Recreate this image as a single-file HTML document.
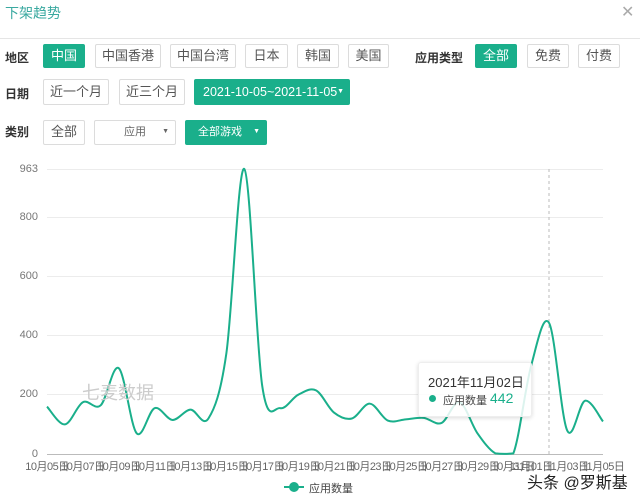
<!DOCTYPE html>
<html><head><meta charset="utf-8"><style>
*{margin:0;padding:0;box-sizing:border-box}
body{width:640px;height:502px;background:#fff;font-family:"Liberation Sans","Noto Sans CJK SC",sans-serif;position:relative;overflow:hidden;color:#555}
.a{position:absolute}
.btn{position:absolute;height:24px;border:1px solid #dcdcdc;border-radius:2px;font-size:13px;line-height:22px;text-align:center;color:#555;background:#fff;white-space:nowrap}
.g{background:#1aaf8b;border-color:#1aaf8b;color:#fff}
.lbl{position:absolute;font-size:12px;color:#333;font-weight:bold}
.yl{position:absolute;font-size:11px;color:#777;width:30px;text-align:right;left:8px}
</style></head><body>
<div class="a" style="left:5px;top:3px;font-size:14px;color:#3aa9a0">下架趋势</div>
<div class="a" style="left:621px;top:2px;font-size:16px;color:#aaa">✕</div>
<div class="a" style="left:0;top:38px;width:640px;height:1px;background:#e5e5e5"></div>

<div class="lbl" style="left:5px;top:49px">地区</div>
<div class="btn g" style="left:43px;top:44px;width:42px">中国</div>
<div class="btn" style="left:95px;top:44px;width:66px">中国香港</div>
<div class="btn" style="left:170px;top:44px;width:66px">中国台湾</div>
<div class="btn" style="left:245px;top:44px;width:43px">日本</div>
<div class="btn" style="left:297px;top:44px;width:42px">韩国</div>
<div class="btn" style="left:348px;top:44px;width:41px">美国</div>
<div class="lbl" style="left:415px;top:49px">应用类型</div>
<div class="btn g" style="left:475px;top:44px;width:42px">全部</div>
<div class="btn" style="left:527px;top:44px;width:42px">免费</div>
<div class="btn" style="left:578px;top:44px;width:42px">付费</div>

<div class="lbl" style="left:5px;top:85px">日期</div>
<div class="btn" style="left:43px;top:79px;width:66px;height:26px;line-height:24px">近一个月</div>
<div class="btn" style="left:119px;top:79px;width:66px;height:26px;line-height:24px">近三个月</div>
<div class="btn g" style="left:194px;top:79px;width:156px;height:26px;line-height:24px;text-align:left;padding-left:8px;font-size:12.5px">2021-10-05~2021-11-05<span style="font-size:7px;position:absolute;right:5px">▼</span></div>

<div class="lbl" style="left:5px;top:123px">类别</div>
<div class="btn" style="left:43px;top:120px;width:42px;height:25px">全部</div>
<div class="btn" style="left:94px;top:120px;width:82px;height:25px;font-size:11px;color:#666">应用<span style="font-size:7px;position:absolute;right:6px">▼</span></div>
<div class="btn g" style="left:185px;top:120px;width:82px;height:25px;font-size:11px;text-align:left;padding-left:12px">全部游戏<span style="font-size:7px;position:absolute;right:6px">▼</span></div>

<svg class="a" style="left:0;top:0" width="640" height="502">
<g stroke="#ececec" stroke-width="1">
<line x1="47" x2="603" y1="169.5" y2="169.5"/><line x1="47" x2="603" y1="217.5" y2="217.5"/>
<line x1="47" x2="603" y1="276.5" y2="276.5"/><line x1="47" x2="603" y1="335.5" y2="335.5"/>
<line x1="47" x2="603" y1="394.5" y2="394.5"/></g>
<line x1="47" x2="603" y1="454.5" y2="454.5" stroke="#bbb"/>
<line x1="549" x2="549" y1="169" y2="454" stroke="#bbb" stroke-dasharray="3,3"/>
<path id="ln" fill="none" stroke="#1aaf8b" stroke-width="2"/>
</svg>
<div class="yl" style="top:163px">963</div>
<div class="yl" style="top:211px">800</div>
<div class="yl" style="top:270px">600</div>
<div class="yl" style="top:329px">400</div>
<div class="yl" style="top:388px">200</div>
<div class="yl" style="top:448px">0</div>
<div id="xl"></div>
<div class="a" style="left:82px;top:379px;font-size:18px;color:#ccc">七麦数据</div>

<div class="a" style="left:418px;top:362px;width:114px;height:55px;background:rgba(255,255,255,0.85);border:1px solid #eee;border-radius:3px;box-shadow:0 1px 4px rgba(0,0,0,.15)">
<div class="a" style="left:9px;top:9px;font-size:13px;color:#333">2021年11月02日</div>
<div class="a" style="left:10px;top:32px;width:7px;height:7px;border-radius:50%;background:#1aaf8b"></div>
<div class="a" style="left:24px;top:29px;font-size:11px;color:#444">应用数量</div>
<div class="a" style="left:71px;top:27px;font-size:14px;color:#1aaf8b">442</div>
</div>

<div class="a" style="left:284px;top:486px;width:20px;height:2px;background:#1aaf8b"></div>
<div class="a" style="left:289px;top:482px;width:10px;height:10px;border-radius:50%;background:#1aaf8b"></div>
<div class="a" style="left:309px;top:480px;font-size:11px;color:#444">应用数量</div>
<div class="a" style="left:527px;top:469px;font-size:16px;color:#222">头条 @罗斯基</div>

<script>
var v=[160,100,175,165,290,70,155,115,150,120,340,963,230,155,200,215,140,120,170,113,117,122,105,175,70,2,2,300,442,80,180,110];
var x0=47,dx=(603-47)/31,pts=v.map(function(a,i){return[x0+i*dx,454-a*285/963]});
function c(y){return Math.min(y,454);}
var d="M"+pts[0][0]+","+pts[0][1];
for(var i=0;i<pts.length-1;i++){var p0=pts[i-1]||pts[i],p1=pts[i],p2=pts[i+1],p3=pts[i+2]||p2;
d+=" C"+(p1[0]+(p2[0]-p0[0])/6)+","+c(p1[1]+(p2[1]-p0[1])/6)+" "+(p2[0]-(p3[0]-p1[0])/6)+","+c(p2[1]-(p3[1]-p1[1])/6)+" "+p2[0]+","+p2[1];}
document.getElementById("ln").setAttribute("d",d);
var h="",lab=[[0,"10月05日"],[2,"10月07日"],[4,"10月09日"],[6,"10月11日"],[8,"10月13日"],[10,"10月15日"],[12,"10月17日"],[14,"10月19日"],[16,"10月21日"],[18,"10月23日"],[20,"10月25日"],[22,"10月27日"],[24,"10月29日"],[26,"10月31日"],[27,"11月01日"],[29,"11月03日"],[31,"11月05日"]];
lab.forEach(function(l){h+='<div class="a" style="left:'+(x0+l[0]*dx-24)+'px;top:458px;width:48px;text-align:center;font-size:11px;color:#666;letter-spacing:-0.5px">'+l[1]+'</div>'});
document.getElementById("xl").innerHTML=h;
</script>
</body></html>
